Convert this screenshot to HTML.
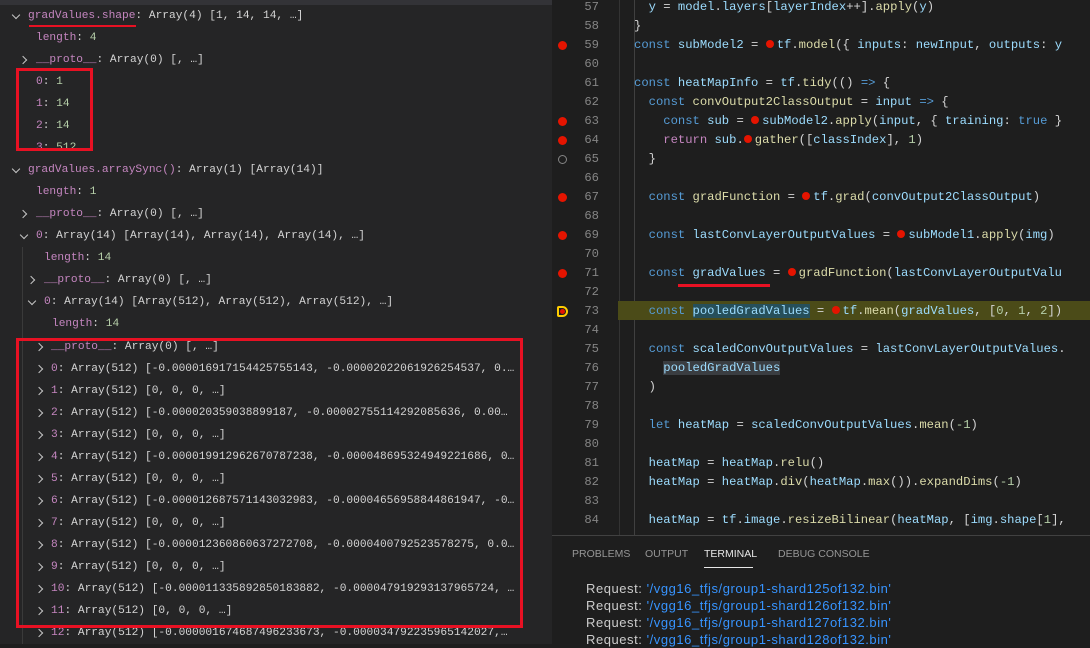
<!DOCTYPE html>
<html><head><meta charset="utf-8"><style>
*{margin:0;padding:0;box-sizing:border-box}
body{width:1090px;height:644px;overflow:hidden;background:#1e1e1e;position:relative;font-family:"Liberation Mono",monospace}
#left{position:absolute;left:0;top:0;width:552px;height:644px;background:#252526;overflow:hidden}
#left .topbar{position:absolute;left:0;top:0;width:552px;height:5px;background:#333337}
.r{position:absolute;height:22px;line-height:22px;font-size:11.2px;color:#d4d4d4;white-space:pre}
.k{color:#c586c0}.n{color:#b5cea8}
.ch{position:absolute;width:6px;height:6px;border-right:1.3px solid #c5c5c5;border-bottom:1.3px solid #c5c5c5}
.cr{transform:rotate(-45deg)}.cd{transform:rotate(45deg)}
#ed{position:absolute;left:552px;top:0;width:538px;height:535px;background:#1e1e1e;overflow:hidden}
.l{position:absolute;left:0;height:19px;line-height:19px;width:538px;font-size:12.2px;white-space:pre;color:#d4d4d4}
.ln{position:absolute;left:0;width:47px;text-align:right;color:#858585}
.c{position:absolute;left:82px}
.bp{position:absolute;left:6px;top:5px;width:9px;height:9px;border-radius:50%;background:#e51400}
.ib{display:inline-block;width:8px;height:8px;border-radius:50%;background:#e51400;margin:0 3px 0 0;vertical-align:-0px}
.kw{color:#569cd6}.v{color:#9cdcfe}.f{color:#dcdcaa}.rt{color:#c586c0}.nm{color:#b5cea8}
#panel{position:absolute;left:552px;top:535px;width:538px;height:109px;background:#1e1e1e;border-top:1px solid #414141}
.tab{position:absolute;top:12px;font-family:"Liberation Sans",sans-serif;font-size:10.5px;color:#969696}
.t{position:absolute;left:34px;font-size:13px;letter-spacing:0.55px;height:17px;line-height:17px;white-space:pre;color:#cccccc;font-family:"Liberation Sans",sans-serif}
.s{color:#3794ff}
.red{position:absolute;border:3px solid #e81123}
</style></head><body>
<div id="left"><div class="topbar"></div>
<div class="ch cd" style="left:13px;top:12px"></div>
<div class="r" style="left:28px;top:5px"><span class="k">gradValues.shape</span>: Array(4) [1, 14, 14, …]</div>
<div class="r" style="left:36px;top:27px"><span class="k">length</span>: <span class="n">4</span></div>
<div class="ch cr" style="left:20px;top:57px"></div>
<div class="r" style="left:36px;top:49px"><span class="k">__proto__</span>: Array(0) [, …]</div>
<div class="r" style="left:36px;top:71px"><span class="k">0</span>: <span class="n">1</span></div>
<div class="r" style="left:36px;top:93px"><span class="k">1</span>: <span class="n">14</span></div>
<div class="r" style="left:36px;top:115px"><span class="k">2</span>: <span class="n">14</span></div>
<div class="r" style="left:36px;top:137px;height:12px;overflow:hidden;line-height:22px"><span class="k">3</span>: <span class="n">512</span></div>
<div class="ch cd" style="left:13px;top:166px"></div>
<div class="r" style="left:28px;top:159px"><span class="k">gradValues.arraySync()</span>: Array(1) [Array(14)]</div>
<div class="r" style="left:36px;top:181px"><span class="k">length</span>: <span class="n">1</span></div>
<div class="ch cr" style="left:20px;top:211px"></div>
<div class="r" style="left:36px;top:203px"><span class="k">__proto__</span>: Array(0) [, …]</div>
<div class="ch cd" style="left:21px;top:232px"></div>
<div class="r" style="left:36px;top:225px"><span class="k">0</span>: Array(14) [Array(14), Array(14), Array(14), …]</div>
<div style="position:absolute;left:22px;top:247px;width:1px;height:400px;background:#3a3a3a"></div>
<div class="r" style="left:44px;top:247px"><span class="k">length</span>: <span class="n">14</span></div>
<div class="ch cr" style="left:28px;top:277px"></div>
<div class="r" style="left:44px;top:269px"><span class="k">__proto__</span>: Array(0) [, …]</div>
<div class="ch cd" style="left:29px;top:298px"></div>
<div class="r" style="left:44px;top:291px"><span class="k">0</span>: Array(14) [Array(512), Array(512), Array(512), …]</div>
<div class="r" style="left:52px;top:313px"><span class="k">length</span>: <span class="n">14</span></div>
<div class="ch cr" style="left:36px;top:344px"></div>
<div class="r" style="left:51px;top:336px"><span class="k">__proto__</span>: Array(0) [, …]</div>
<div class="ch cr" style="left:36px;top:366px"></div><div class="r" style="left:51px;top:358px"><span class="k">0</span>: Array(512) [-0.000016917154425755143, -0.00002022061926254537, 0.…</div>
<div class="ch cr" style="left:36px;top:388px"></div><div class="r" style="left:51px;top:380px"><span class="k">1</span>: Array(512) [0, 0, 0, …]</div>
<div class="ch cr" style="left:36px;top:410px"></div><div class="r" style="left:51px;top:402px"><span class="k">2</span>: Array(512) [-0.000020359038899187, -0.00002755114292085636, 0.00…</div>
<div class="ch cr" style="left:36px;top:432px"></div><div class="r" style="left:51px;top:424px"><span class="k">3</span>: Array(512) [0, 0, 0, …]</div>
<div class="ch cr" style="left:36px;top:454px"></div><div class="r" style="left:51px;top:446px"><span class="k">4</span>: Array(512) [-0.000019912962670787238, -0.000048695324949221686, 0…</div>
<div class="ch cr" style="left:36px;top:476px"></div><div class="r" style="left:51px;top:468px"><span class="k">5</span>: Array(512) [0, 0, 0, …]</div>
<div class="ch cr" style="left:36px;top:498px"></div><div class="r" style="left:51px;top:490px"><span class="k">6</span>: Array(512) [-0.000012687571143032983, -0.00004656958844861947, -0…</div>
<div class="ch cr" style="left:36px;top:520px"></div><div class="r" style="left:51px;top:512px"><span class="k">7</span>: Array(512) [0, 0, 0, …]</div>
<div class="ch cr" style="left:36px;top:542px"></div><div class="r" style="left:51px;top:534px"><span class="k">8</span>: Array(512) [-0.000012360860637272708, -0.0000400792523578275, 0.0…</div>
<div class="ch cr" style="left:36px;top:564px"></div><div class="r" style="left:51px;top:556px"><span class="k">9</span>: Array(512) [0, 0, 0, …]</div>
<div class="ch cr" style="left:36px;top:586px"></div><div class="r" style="left:51px;top:578px"><span class="k">10</span>: Array(512) [-0.000011335892850183882, -0.000047919293137965724, …</div>
<div class="ch cr" style="left:36px;top:608px"></div><div class="r" style="left:51px;top:600px"><span class="k">11</span>: Array(512) [0, 0, 0, …]</div>
<div class="ch cr" style="left:36px;top:630px"></div><div class="r" style="left:51px;top:622px"><span class="k">12</span>: Array(512) [-0.000001674687496233673, -0.000034792235965142027,…</div>
<div style="position:absolute;left:29px;top:25px;width:107px;height:2px;background:#e81123"></div>
<div class="red" style="left:16px;top:68px;width:77px;height:83px"></div>
<div class="red" style="left:16px;top:338px;width:507px;height:290px"></div>
</div>
<div id="ed">
<div style="position:absolute;left:67px;top:0;width:1px;height:535px;background:#333"></div>
<div style="position:absolute;left:82px;top:0;width:1px;height:535px;background:#404040"></div>
<div style="position:absolute;left:66px;top:301px;width:472px;height:19px;background:#4b4b18"></div>
<div class="l" style="top:-2px"><span class="ln">57</span><span class="c">  <span class="v">y</span> = <span class="v">model</span>.<span class="v">layers</span>[<span class="v">layerIndex</span>++].<span class="f">apply</span>(<span class="v">y</span>)</span></div>
<div class="l" style="top:17px"><span class="ln">58</span><span class="c">}</span></div>
<div class="l" style="top:36px"><span class="bp"></span><span class="ln">59</span><span class="c"><span class="kw">const</span> <span class="v">subModel2</span> = <span class="ib"></span><span class="v">tf</span>.<span class="f">model</span>({ <span class="v">inputs</span>: <span class="v">newInput</span>, <span class="v">outputs</span>: <span class="v">y</span></span></div>
<div class="l" style="top:55px"><span class="ln">60</span></div>
<div class="l" style="top:74px"><span class="ln">61</span><span class="c"><span class="kw">const</span> <span class="v">heatMapInfo</span> = <span class="v">tf</span>.<span class="f">tidy</span>(() <span class="kw">=&gt;</span> {</span></div>
<div class="l" style="top:93px"><span class="ln">62</span><span class="c">  <span class="kw">const</span> <span class="f">convOutput2ClassOutput</span> = <span class="v">input</span> <span class="kw">=&gt;</span> {</span></div>
<div class="l" style="top:112px"><span class="bp"></span><span class="ln">63</span><span class="c">    <span class="kw">const</span> <span class="v">sub</span> = <span class="ib"></span><span class="v">subModel2</span>.<span class="f">apply</span>(<span class="v">input</span>, { <span class="v">training</span>: <span class="kw">true</span> }</span></div>
<div class="l" style="top:131px"><span class="bp"></span><span class="ln">64</span><span class="c">    <span class="rt">return</span> <span class="v">sub</span>.<span class="ib"></span><span class="f">gather</span>([<span class="v">classIndex</span>], <span class="nm">1</span>)</span></div>
<div class="l" style="top:150px"><span class="bp" style="background:none;border:1.5px solid #858585"></span><span class="ln">65</span><span class="c">  }</span></div>
<div class="l" style="top:169px"><span class="ln">66</span></div>
<div class="l" style="top:188px"><span class="bp"></span><span class="ln">67</span><span class="c">  <span class="kw">const</span> <span class="f">gradFunction</span> = <span class="ib"></span><span class="v">tf</span>.<span class="f">grad</span>(<span class="v">convOutput2ClassOutput</span>)</span></div>
<div class="l" style="top:207px"><span class="ln">68</span></div>
<div class="l" style="top:226px"><span class="bp"></span><span class="ln">69</span><span class="c">  <span class="kw">const</span> <span class="v">lastConvLayerOutputValues</span> = <span class="ib"></span><span class="v">subModel1</span>.<span class="f">apply</span>(<span class="v">img</span>)</span></div>
<div class="l" style="top:245px"><span class="ln">70</span></div>
<div class="l" style="top:264px"><span class="bp"></span><span class="ln">71</span><span class="c">  <span class="kw">const</span> <span class="v">gradValues</span> = <span class="ib"></span><span class="f">gradFunction</span>(<span class="v">lastConvLayerOutputValu</span></span></div>
<div style="position:absolute;left:126px;top:284px;width:92px;height:3px;background:#e81123"></div>
<div class="l" style="top:283px"><span class="ln">72</span></div>
<div class="l" style="top:302px"><span style="position:absolute;left:5px;top:4px;width:11px;height:11px;border:2px solid #ffcc00;border-radius:2px 6px 6px 2px"></span><span style="position:absolute;left:8px;top:7px;width:5px;height:5px;border-radius:50%;background:#e51400"></span><span class="ln">73</span><span class="c">  <span class="kw">const</span> <span class="v" style="background:#264f5a">pooledGradValues</span> = <span class="ib"></span><span class="v">tf</span>.<span class="f">mean</span>(<span class="v">gradValues</span>, [<span class="nm">0</span>, <span class="nm">1</span>, <span class="nm">2</span>])</span></div>
<div class="l" style="top:321px"><span class="ln">74</span></div>
<div class="l" style="top:340px"><span class="ln">75</span><span class="c">  <span class="kw">const</span> <span class="v">scaledConvOutputValues</span> = <span class="v">lastConvLayerOutputValues</span>.</span></div>
<div class="l" style="top:359px"><span class="ln">76</span><span class="c">    <span class="v" style="background:#3a3d41">pooledGradValues</span></span></div>
<div class="l" style="top:378px"><span class="ln">77</span><span class="c">  )</span></div>
<div class="l" style="top:397px"><span class="ln">78</span></div>
<div class="l" style="top:416px"><span class="ln">79</span><span class="c">  <span class="kw">let</span> <span class="v">heatMap</span> = <span class="v">scaledConvOutputValues</span>.<span class="f">mean</span>(<span class="nm">-1</span>)</span></div>
<div class="l" style="top:435px"><span class="ln">80</span></div>
<div class="l" style="top:454px"><span class="ln">81</span><span class="c">  <span class="v">heatMap</span> = <span class="v">heatMap</span>.<span class="f">relu</span>()</span></div>
<div class="l" style="top:473px"><span class="ln">82</span><span class="c">  <span class="v">heatMap</span> = <span class="v">heatMap</span>.<span class="f">div</span>(<span class="v">heatMap</span>.<span class="f">max</span>()).<span class="f">expandDims</span>(<span class="nm">-1</span>)</span></div>
<div class="l" style="top:492px"><span class="ln">83</span></div>
<div class="l" style="top:511px"><span class="ln">84</span><span class="c">  <span class="v">heatMap</span> = <span class="v">tf</span>.<span class="v">image</span>.<span class="f">resizeBilinear</span>(<span class="v">heatMap</span>, [<span class="v">img</span>.<span class="v">shape</span>[<span class="nm">1</span>],</span></div>
</div>
<div id="panel">
<div class="tab" style="left:20px">PROBLEMS</div>
<div class="tab" style="left:93px">OUTPUT</div>
<div class="tab" style="left:152px;color:#e7e7e7">TERMINAL</div>
<div style="position:absolute;left:152px;top:31px;width:49px;height:1px;background:#e7e7e7"></div>
<div class="tab" style="left:226px">DEBUG CONSOLE</div>
<div class="t" style="top:44px">Request: <span class="s">'/vgg16_tfjs/group1-shard125of132.bin'</span></div>
<div class="t" style="top:61px">Request: <span class="s">'/vgg16_tfjs/group1-shard126of132.bin'</span></div>
<div class="t" style="top:78px">Request: <span class="s">'/vgg16_tfjs/group1-shard127of132.bin'</span></div>
<div class="t" style="top:95px">Request: <span class="s">'/vgg16_tfjs/group1-shard128of132.bin'</span></div>
</div>
</body></html>
